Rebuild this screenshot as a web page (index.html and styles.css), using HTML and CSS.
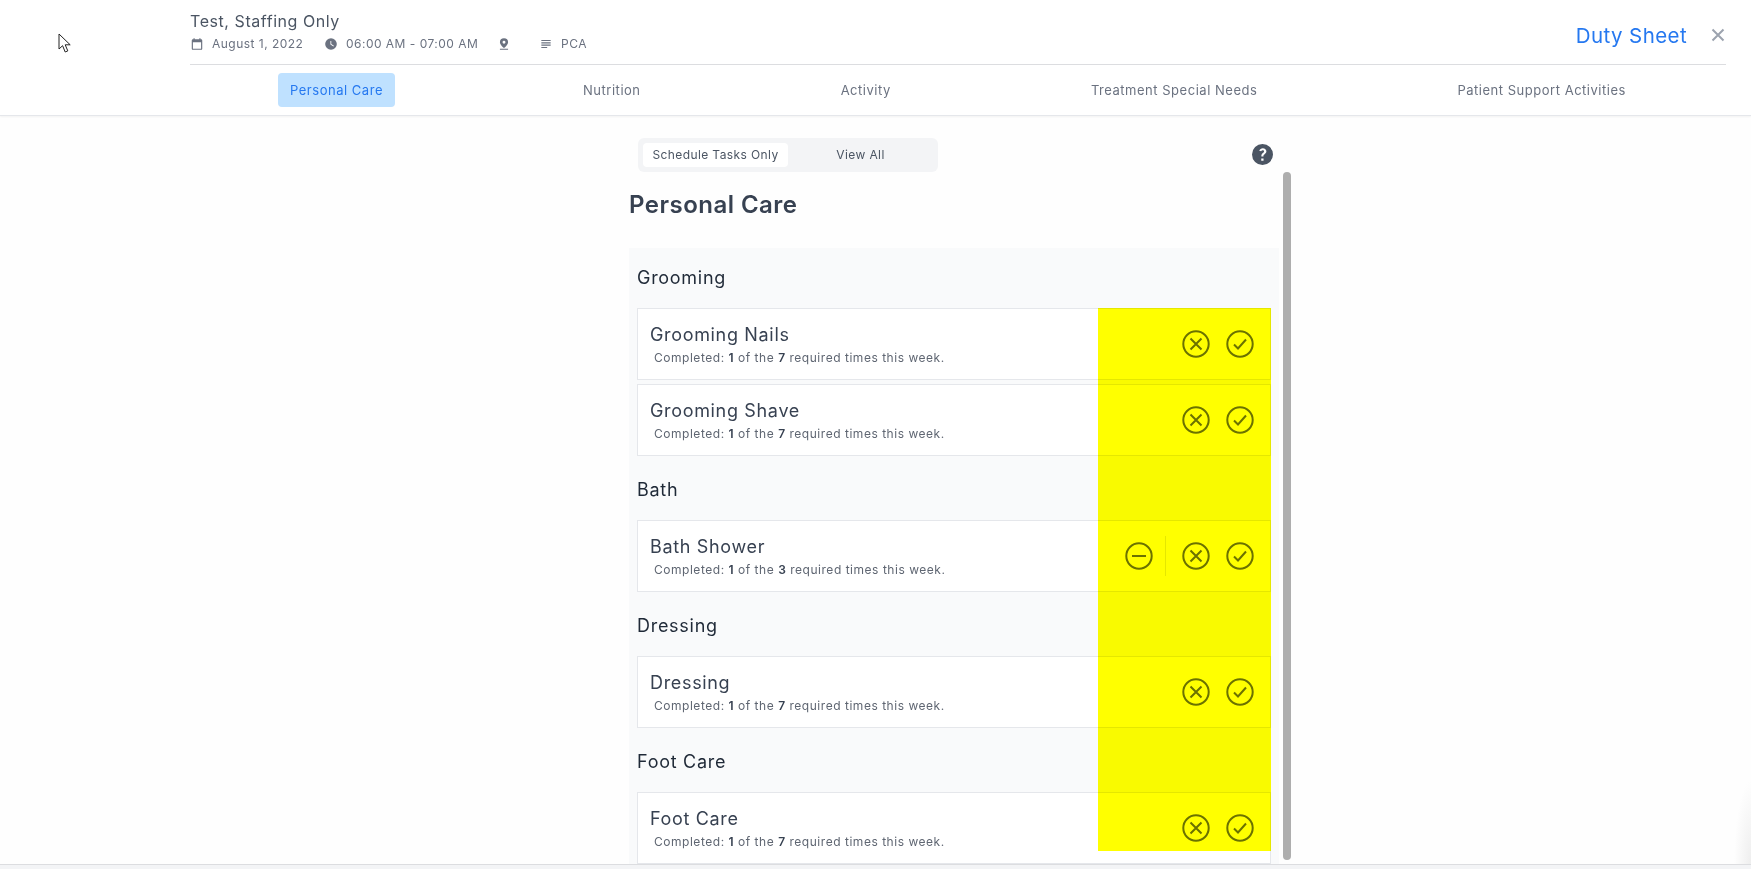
FILE: index.html
```html
<html lang="en">
  <head>
    <meta charset="UTF-8" />
    <meta name="viewport" content="width=device-width, initial-scale=1.0" />
    <title>Duty Sheet</title>
    <link rel="stylesheet" href="styles.css">
  </head>
  <body>
    <svg class="cursor" width="14" height="21" viewBox="0 0 14 21">
      <path d="M1 1v15l3.6-3.3 2.6 6.3 2.6-1.1-2.6-6.1h5z" fill="#fff" stroke="#222" stroke-width="1" />
    </svg>
    <header class="header">
      <div class="header-top">
        <div class="patient">
          <h1 class="patient-name">Test, Staffing Only</h1>
          <div class="meta">
            <span class="meta-item meta-date">
              <svg class="meta-icon" viewBox="0 0 24 24"><path d="M19 4h-1V2h-2v2H8V2H6v2H5a2 2 0 0 0-2 2v14a2 2 0 0 0 2 2h14a2 2 0 0 0 2-2V6a2 2 0 0 0-2-2zm0 16H5V9h14z" /></svg>
              August 1, 2022
            </span>
            <span class="meta-item meta-time">
              <svg class="meta-icon" viewBox="0 0 24 24"><path d="M12 2a10 10 0 1 0 0 20 10 10 0 0 0 0-20zm4.2 14.2L11 13V7h1.5v5.2l4.5 2.7z" /></svg>
              06:00 AM - 07:00 AM
            </span>
            <span class="meta-item meta-place">
              <svg class="meta-icon" viewBox="0 0 24 24"><path d="M12 2a7 7 0 0 0-7 7c0 4.5 7 10 7 10s7-5.500 7-10a7 7 0 0 0-7-7zm0 9.500a2.500 2.500 0 1 1 0-5 2.500 2.500 0 0 1 0 5zM5 20h14v2H5z" /></svg>
            </span>
            <span class="meta-item">
              <svg class="meta-icon" viewBox="0 0 24 24"><path d="M4 5h16v2H4zm0 4h16v2H4zm0 4h16v2H4zm0 4h10v2H4z" /></svg>
              PCA
            </span>
          </div>
        </div>
        <div class="header-right">
          <span class="sheet-title">Duty Sheet</span>
          <svg class="close" viewBox="0 0 14 14"><path d="M1.500 1.500l11 11M12.500 1.500l-11 11" /></svg>
        </div>
      </div>
      <nav class="tabs">
        <a class="tab active">Personal Care</a>
        <a class="tab">Nutrition</a>
        <a class="tab">Activity</a>
        <a class="tab">Treatment Special Needs</a>
        <a class="tab">Patient Support Activities</a>
      </nav>
    </header>

    <main class="content">
      <div class="column">
        <div class="toolbar">
          <div class="toggle">
            <span class="toggle-btn selected">Schedule Tasks Only</span>
            <span class="toggle-btn">View All</span>
          </div>
          <svg class="help" viewBox="0 0 20 20"><path fill-rule="evenodd" d="M10 0a10 10 0 1 0 0 20 10 10 0 0 0 0-20zM6.900 6.400C7.500 4.900 8.700 4 10.300 4c2 0 3.400 1.300 3.400 3 0 1.400-.8 2.100-1.700 2.700-.8.500-1.100.9-1.100 1.600v.6H8.900v-.7c0-1.300.6-2.100 1.500-2.700.7-.5 1.100-.8 1.100-1.400 0-.7-.5-1.200-1.300-1.200-.7 0-1.200.4-1.500 1.100zM11 16H8.800v-2.200H11z" /></svg>
        </div>
        <div class="scroll-area">
          <h2 class="page-title">Personal Care</h2>
          <section class="groups">
            <h3 class="group-title">Grooming</h3>
            <div class="task">
              <div>
                <p class="task-name">Grooming Nails</p>
                <p class="task-note">Completed: <b>1</b> of the <b>7</b> required times this week.</p>
              </div>
              <div class="task-actions">
                <svg class="action" viewBox="0 0 28 28"><circle cx="14" cy="14" r="12.700" /><path d="M8.500 8.500l11 11M19.500 8.500l-11 11" /></svg>
                <svg class="action" viewBox="0 0 28 28"><circle cx="14" cy="14" r="12.700" /><path d="M8 14.500l4 4 8-9" /></svg>
              </div>
            </div>
            <div class="task">
              <div>
                <p class="task-name">Grooming Shave</p>
                <p class="task-note">Completed: <b>1</b> of the <b>7</b> required times this week.</p>
              </div>
              <div class="task-actions">
                <svg class="action" viewBox="0 0 28 28"><circle cx="14" cy="14" r="12.700" /><path d="M8.500 8.500l11 11M19.500 8.500l-11 11" /></svg>
                <svg class="action" viewBox="0 0 28 28"><circle cx="14" cy="14" r="12.700" /><path d="M8 14.500l4 4 8-9" /></svg>
              </div>
            </div>

            <h3 class="group-title">Bath</h3>
            <div class="task">
              <div>
                <p class="task-name">Bath Shower</p>
                <p class="task-note">Completed: <b>1</b> of the <b>3</b> required times this week.</p>
              </div>
              <div class="task-actions">
                <svg class="action" viewBox="0 0 28 28"><circle cx="14" cy="14" r="12.700" /><path d="M7 14h14" /></svg>
                <span class="action-divider"></span>
                <svg class="action" viewBox="0 0 28 28"><circle cx="14" cy="14" r="12.700" /><path d="M8.500 8.500l11 11M19.500 8.500l-11 11" /></svg>
                <svg class="action" viewBox="0 0 28 28"><circle cx="14" cy="14" r="12.700" /><path d="M8 14.500l4 4 8-9" /></svg>
              </div>
            </div>

            <h3 class="group-title">Dressing</h3>
            <div class="task">
              <div>
                <p class="task-name">Dressing</p>
                <p class="task-note">Completed: <b>1</b> of the <b>7</b> required times this week.</p>
              </div>
              <div class="task-actions">
                <svg class="action" viewBox="0 0 28 28"><circle cx="14" cy="14" r="12.700" /><path d="M8.500 8.500l11 11M19.500 8.500l-11 11" /></svg>
                <svg class="action" viewBox="0 0 28 28"><circle cx="14" cy="14" r="12.700" /><path d="M8 14.500l4 4 8-9" /></svg>
              </div>
            </div>

            <h3 class="group-title">Foot Care</h3>
            <div class="task">
              <div>
                <p class="task-name">Foot Care</p>
                <p class="task-note">Completed: <b>1</b> of the <b>7</b> required times this week.</p>
              </div>
              <div class="task-actions">
                <svg class="action" viewBox="0 0 28 28"><circle cx="14" cy="14" r="12.700" /><path d="M8.500 8.500l11 11M19.500 8.500l-11 11" /></svg>
                <svg class="action" viewBox="0 0 28 28"><circle cx="14" cy="14" r="12.700" /><path d="M8 14.500l4 4 8-9" /></svg>
              </div>
            </div>
            <div class="highlight"></div>
          </section>
          <div class="scrollbar"></div>
        </div>
      </div>
    </main>
    <div class="edge-shade"></div>
    <footer class="footer"></footer>
  </body>
</html>
```

FILE: styles.css
```css
html,
body {
  height: 100%;
}
body {
  margin: 0;
  display: flex;
  flex-direction: column;
  overflow: hidden;
  background-color: #fefefe;
  color: #374151;
  font-family: "Inter", "Noto Sans", sans-serif;
  letter-spacing: 0.025em;
}
h1,
h2,
h3,
p {
  margin: 0;
  font-weight: inherit;
}
.cursor {
  position: absolute;
  left: 58px;
  top: 33px;
}
.header {
  height: 116px;
  flex: none;
  box-sizing: border-box;
  padding: 0 25px 0 190px;
  background-color: #fff;
  border-bottom: 1px solid #e5e7eb;
  box-shadow: 0 1px 2px rgba(0, 0, 0, 0.05);
}
.header-top {
  height: 65px;
  box-sizing: border-box;
  display: flex;
  justify-content: space-between;
  border-bottom: 1px solid #dcdde0;
}
.patient {
  padding-top: 12px;
}
.patient-name {
  font-size: 16px;
  line-height: 19px;
  letter-spacing: 0.035em;
  color: #4b5563;
}
.meta {
  display: flex;
  align-items: center;
  margin-top: 5px;
  font-size: 12px;
  line-height: 16px;
  letter-spacing: 0.04em;
  color: #6b7280;
}
.meta-item {
  display: flex;
  align-items: center;
  gap: 8px;
}
.meta-date {
  width: 134px;
}
.meta-time {
  width: 173px;
}
.meta-place {
  width: 42px;
}
.meta-icon {
  width: 14px;
  height: 14px;
  fill: #6b7280;
}
.header-right {
  display: flex;
  align-items: center;
  gap: 24px;
  height: 70px;
}
.sheet-title {
  font-size: 20.5px;
  color: #2578f0;
}
.close {
  width: 14px;
  height: 14px;
  margin-right: 1px;
  fill: none;
  stroke: #9ca3af;
  stroke-width: 2;
}
.tabs {
  display: flex;
  justify-content: space-around;
  align-items: center;
  height: 50px;
}
.tab {
  padding: 0 12px;
  line-height: 34px;
  border-radius: 4px;
  font-size: 13px;
  letter-spacing: 0.04em;
  color: #6b7280;
}
.tab.active {
  background-color: #bfe1ff;
  color: #2578f0;
}
.content {
  flex: 1;
  min-height: 0;
  display: flex;
  justify-content: center;
}
.column {
  width: 662px;
  margin-left: 169px;
}
.toolbar {
  display: flex;
  justify-content: space-between;
  align-items: center;
  height: 34px;
  margin-top: 22px;
  padding: 0 18px 0 9px;
}
.toggle {
  width: 300px;
  height: 34px;
  box-sizing: border-box;
  padding: 5px;
  display: flex;
  background-color: #f3f4f6;
  border-radius: 6px;
}
.toggle-btn {
  display: flex;
  justify-content: center;
  align-items: center;
  flex: 1;
  padding-bottom: 2px;
  font-size: 12px;
  color: #4b5563;
  border-radius: 4px;
}
.toggle-btn.selected {
  flex: none;
  width: 145px;
  background-color: #fff;
}
.help {
  width: 21px;
  height: 21px;
  margin-bottom: 2px;
  fill: #4b5563;
}
.scroll-area {
  position: relative;
  height: 692px;
}
.page-title {
  padding-top: 16px;
  height: 76px;
  box-sizing: border-box;
  font-size: 24px;
  line-height: 34px;
  font-weight: 600;
  letter-spacing: 0.02em;
}
.groups {
  position: relative;
  width: 650px;
  box-sizing: border-box;
  padding: 0 8px;
  background-color: #f9fafb;
}
.group-title {
  padding-top: 19px;
  height: 60px;
  box-sizing: border-box;
  font-size: 18px;
  line-height: 22px;
  letter-spacing: 0.04em;
  color: #1f2937;
}
.task + .group-title {
  padding-top: 23px;
  height: 64px;
}
.task {
  display: flex;
  justify-content: space-between;
  align-items: center;
  height: 72px;
  box-sizing: border-box;
  padding: 0 16px 0 12px;
  background-color: #fff;
  border: 1px solid #e5e7eb;
}
.task + .task {
  margin-top: 4px;
}
.task-name {
  margin-top: 2px;
  font-size: 18px;
  line-height: 22px;
  letter-spacing: 0.037em;
}
.task-note {
  margin-top: 4px;
  padding-left: 4px;
  font-size: 12px;
  line-height: 16px;
  letter-spacing: 0.044em;
  color: #5f6672;
}
.task-note b {
  font-weight: 600;
  color: #374151;
}
.task-actions {
  display: flex;
  align-items: center;
  gap: 16px;
}
.action {
  width: 28px;
  height: 28px;
  fill: none;
  stroke: #6b7280;
  stroke-width: 2;
}
.action-divider {
  width: 1px;
  height: 40px;
  margin: 0 0 0 -4px;
  background-color: #e5e7eb;
}
.highlight {
  position: absolute;
  left: 469px;
  right: 8px;
  top: 60px;
  bottom: 13px;
  background-color: #ff0;
  mix-blend-mode: multiply;
}
.scrollbar {
  position: absolute;
  left: 654px;
  top: 0;
  bottom: 4px;
  width: 8px;
  border-radius: 4px;
  background-color: #aeaeae;
}
.edge-shade {
  position: absolute;
  right: 0;
  bottom: 5px;
  width: 17px;
  height: 84px;
  background: radial-gradient(ellipse at 100% 100%, #eeeeee, rgba(238, 238, 238, 0) 70%);
}
.footer {
  flex: none;
  height: 5px;
  box-sizing: border-box;
  background-color: #f3f4f6;
  border-top: 1px solid #dcdde0;
}
```
